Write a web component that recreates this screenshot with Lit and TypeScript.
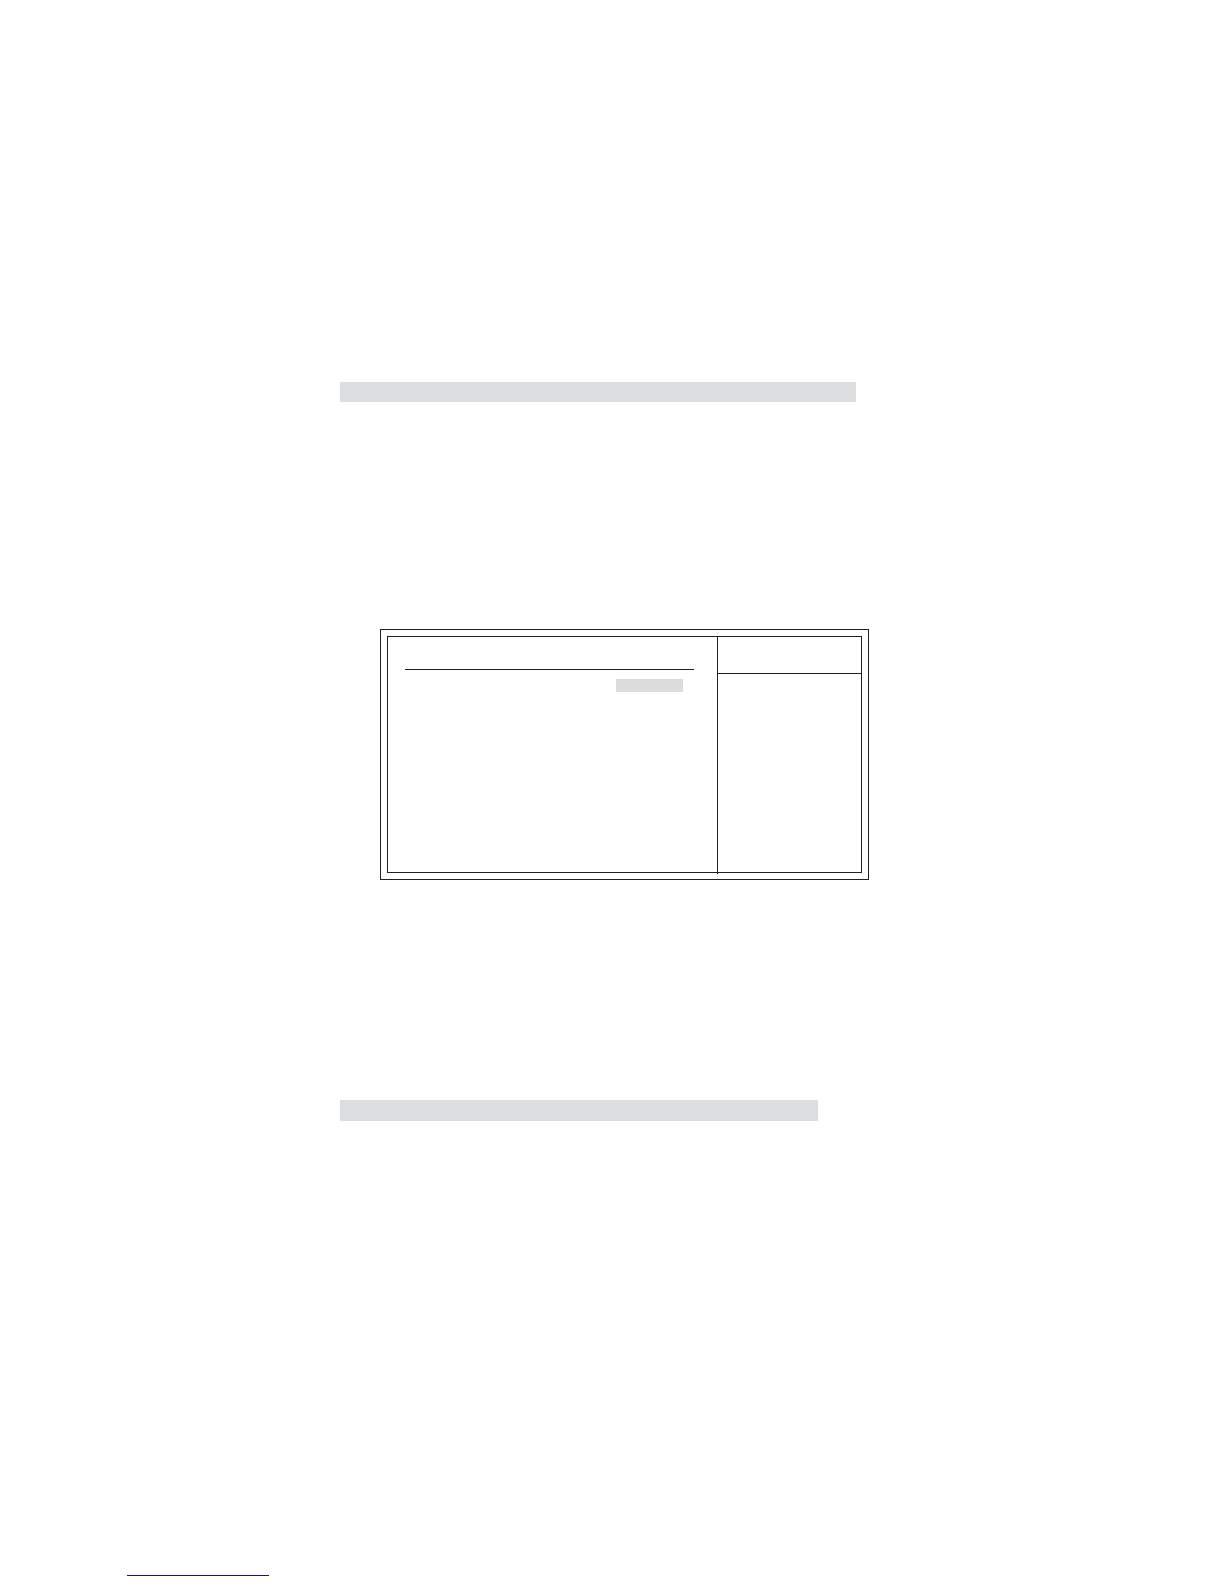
import { LitElement, html, css } from "lit";
import { customElement } from "lit/decorators.js";

@customElement("setup-panel")
class SetupPanel extends LitElement {
  static styles = css`
    :host {
      display: block;
      box-sizing: border-box;
      border: 1px solid #231f20;
      padding: 6px;
    }
    .inner {
      display: grid;
      grid-template-columns: minmax(0, 1fr) 144px;
      min-height: 235px;
      border: 1px solid #231f20;
    }
    .options {
      padding: 32px 23px 0 17px;
    }
    .rule {
      height: 1px;
      background: #231f20;
    }
    .selected {
      width: 67px;
      height: 13px;
      margin: 9px 11px 0 auto;
      background: #dcdcdc;
    }
    /* The divider runs just past the lower frame line. */
    .help {
      border-left: 1px solid #231f20;
      margin-bottom: -2px;
    }
    .help-title {
      height: 36px;
      border-bottom: 1px solid #231f20;
    }
  `;

  render() {
    return html`
      <div class="inner">
        <section class="options">
          <div class="rule"></div>
          <div class="selected"></div>
        </section>
        <aside class="help">
          <div class="help-title"></div>
        </aside>
      </div>
    `;
  }
}

@customElement("app-root")
class AppRoot extends LitElement {
  static styles = css`
    :host {
      display: flex;
      flex-direction: column;
      box-sizing: border-box;
      min-height: 100vh;
      background: #ffffff;
      font-family: "Liberation Sans", sans-serif;
    }
    main {
      flex: 1;
      padding: 382px 355px 0 340px;
    }
    .band {
      height: 20px;
      margin-right: 13px;
      background: #dbddde;
    }
    .band.lower {
      height: 21px;
      margin-right: 51px;
    }
    setup-panel {
      margin: 227px 0 220px 40px;
    }
    footer {
      padding: 0 127px 8px;
    }
    .footer-line {
      width: 142px;
      height: 1px;
      background: #10108c;
    }
  `;

  render() {
    return html`
      <main>
        <div class="band"></div>
        <setup-panel></setup-panel>
        <div class="band lower"></div>
      </main>
      <footer><div class="footer-line"></div></footer>
    `;
  }
}
